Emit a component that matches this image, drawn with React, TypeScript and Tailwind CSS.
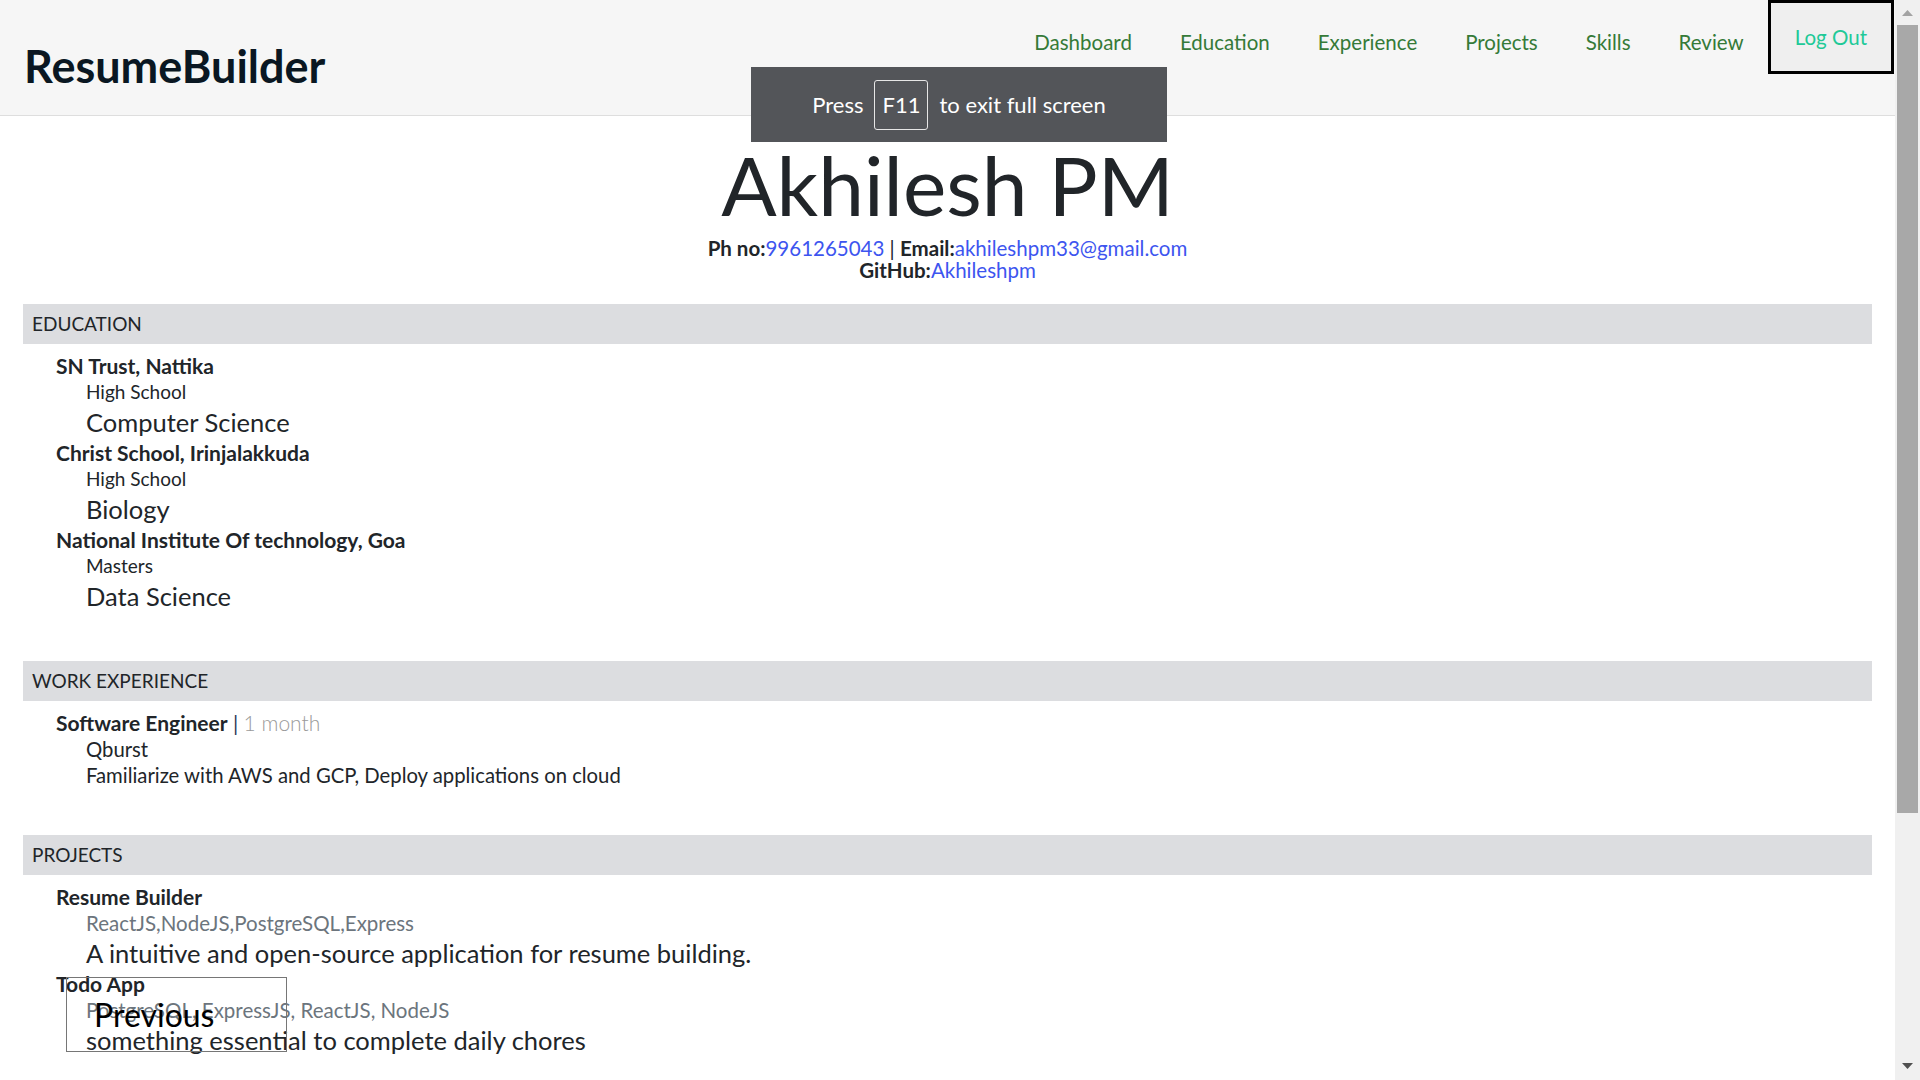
import React from "react";

const navLinks = ["Dashboard", "Education", "Experience", "Projects", "Skills", "Review"];

const education = [
  { school: "SN Trust, Nattika", level: "High School", field: "Computer Science" },
  { school: "Christ School, Irinjalakkuda", level: "High School", field: "Biology" },
  { school: "National Institute Of technology, Goa", level: "Masters", field: "Data Science" },
];

const projects = [
  {
    title: "Resume Builder",
    tech: "ReactJS,NodeJS,PostgreSQL,Express",
    desc: "A intuitive and open-source application for resume building.",
  },
  {
    title: "Todo App",
    tech: "PostgreSQL, ExpressJS, ReactJS, NodeJS",
    desc: "something essential to complete daily chores",
  },
];

const SectionBar = ({ title }: { title: string }) => (
  <div className="flex h-[40px] items-center bg-[#dcdde0] px-[9px] text-[19px] uppercase text-[#212529]">
    {title}
  </div>
);

const Scrollbar = () => (
  <div className="flex h-full w-[25px] shrink-0 flex-col items-center bg-[#f0f0f0]">
    <div className="flex h-[25px] w-full items-start justify-center pt-[10px]">
      <svg width="11" height="6" viewBox="0 0 11 6">
        <polygon points="5.5,0 11,6 0,6" fill="#a3a3a3" />
      </svg>
    </div>
    <div className="h-[788px] w-[21px] bg-[#a8a8a8]" />
    <div className="flex-1" />
    <div className="flex h-[25px] w-full items-start justify-center pt-[8px]">
      <svg width="11" height="6" viewBox="0 0 11 6">
        <polygon points="0,0 11,0 5.5,6" fill="#505050" />
      </svg>
    </div>
  </div>
);

export default function App() {
  return (
    <div className="relative flex h-screen w-full overflow-hidden bg-white font-['Lato',sans-serif] text-[#212529]">
      <div className="relative flex min-w-0 flex-1 flex-col">
        <header className="flex h-[116px] shrink-0 justify-between border-b border-[#dedede] bg-[#f6f6f6]">
          <div className="pl-[24px] pt-[44px]">
            <span className="text-[45px] font-bold leading-none text-[#0a1722]">ResumeBuilder</span>
          </div>
          <nav className="flex items-start">
            {navLinks.map((l) => (
              <a key={l} className="px-6 pt-[29px] text-[20.5px] leading-[26px] text-[#357a38]">
                {l}
              </a>
            ))}
            <a className="mr-[1px] border-[3px] border-black bg-[#efefef] px-6 py-[21px] text-[20.5px] leading-[26px] text-[#20c997]">
              Log Out
            </a>
          </nav>
        </header>

        <h1 className="mt-[27px] text-center text-[82px] font-normal leading-none">Akhilesh PM</h1>
        <div className="mt-[12px] text-center text-[20.5px] leading-[22px]">
          <div>
            <span className="font-bold">Ph no:</span>
            <span className="text-[#3d55ef]">9961265043</span>
            <span> | </span>
            <span className="font-bold">Email:</span>
            <span className="text-[#3d55ef]">akhileshpm33@gmail.com</span>
          </div>
          <div>
            <span className="font-bold">GitHub:</span>
            <span className="text-[#3d55ef]">Akhileshpm</span>
          </div>
        </div>

        <div className="mx-[23px] mt-[23px]">
          <section className="mb-[47px]">
            <SectionBar title="Education" />
            <div className="pl-[33px] pt-[9px]">
              {education.map((e) => (
                <div key={e.school}>
                  <div className="text-[21px] font-bold leading-[26px]">{e.school}</div>
                  <div className="pl-[30px] text-[19px] leading-[26px]">{e.level}</div>
                  <div className="pl-[30px] text-[25.5px] leading-[35px]">{e.field}</div>
                </div>
              ))}
            </div>
          </section>

          <section className="mb-[47px]">
            <SectionBar title="Work Experience" />
            <div className="pl-[33px] pt-[9px]">
              <div className="text-[21px] leading-[26px]">
                <span className="font-bold">Software Engineer</span>
                <span className="text-[#2b3a55]"> | </span>
                <span className="font-light text-[#9a9a9a]">1 month</span>
              </div>
              <div className="pl-[30px] text-[20.3px] leading-[26px]">Qburst</div>
              <div className="pl-[30px] text-[20.3px] leading-[26px]">
                Familiarize with AWS and GCP, Deploy applications on cloud
              </div>
            </div>
          </section>

          <section>
            <SectionBar title="Projects" />
            <div className="pl-[33px] pt-[9px]">
              {projects.map((p) => (
                <div key={p.title}>
                  <div className="text-[21px] font-bold leading-[26px]">{p.title}</div>
                  <div className="pl-[30px] text-[20.5px] leading-[26px] text-[#6c757d]">{p.tech}</div>
                  <div className="pl-[30px] text-[25.5px] leading-[35px]">{p.desc}</div>
                </div>
              ))}
            </div>
          </section>
        </div>

        <button className="absolute left-[66px] top-[977px] flex h-[75px] w-[221px] items-center border border-[#767676] pl-[27px] text-[32px] leading-none text-black">
          Previous
        </button>
      </div>

      <Scrollbar />

      <div className="absolute left-[751px] top-[67px] flex h-[75px] w-[416px] items-center justify-center gap-[11px] bg-[#535559] text-[22px] text-white">
        <span>Press</span>
        <span className="flex h-[50px] w-[54px] items-center justify-center rounded-[3px] border border-[#e6e6e6]">F11</span>
        <span>to exit full screen</span>
      </div>
    </div>
  );
}
